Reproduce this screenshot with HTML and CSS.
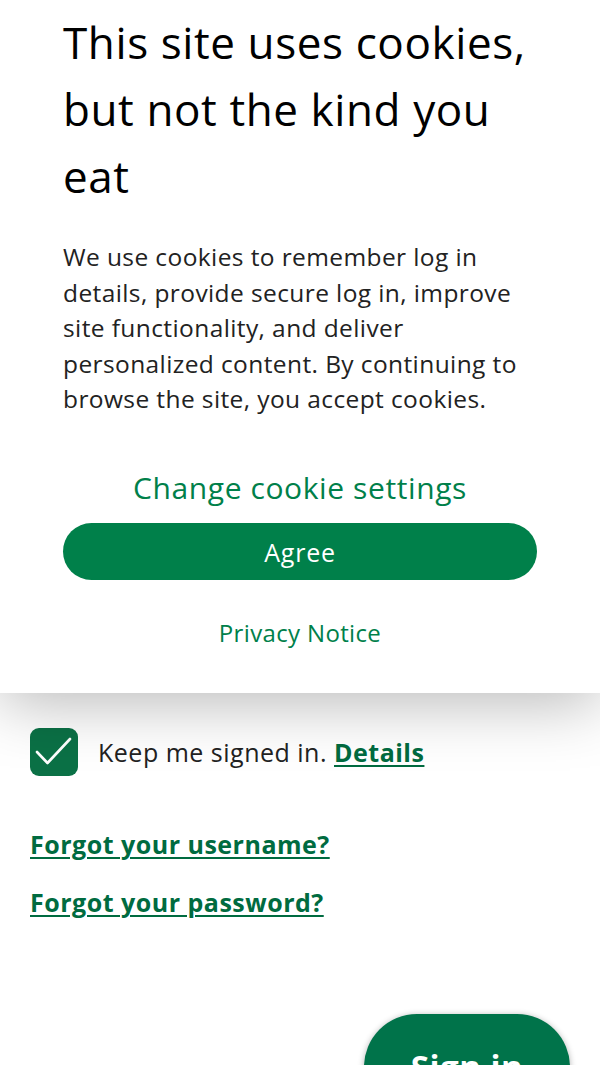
FILE: index.html
```html
<!DOCTYPE html>
<html lang="en">
<head>
<meta charset="utf-8">
<title>Sign in</title>
<link rel="stylesheet" href="styles.css">
</head>
<body>
<div class="banner">
  <h1 class="banner-title">This site uses cookies, but not the kind you eat</h1>
  <p class="banner-text">We use cookies to remember log in details, provide secure log in, improve site functionality, and deliver personalized content. By continuing to browse the site, you accept cookies.</p>
  <a class="settings-link" href="#">Change cookie settings</a>
  <button class="agree-btn" type="button">Agree</button>
  <a class="privacy-link" href="#">Privacy Notice</a>
</div>
<main class="content">
  <label class="keep">
    <span class="checkbox">
      <svg width="48" height="48" viewBox="0 0 48 48"><path d="M7 24 L17.5 35 L40 11" fill="none" stroke="#fff" stroke-width="2.6" stroke-linecap="round" stroke-linejoin="round"/></svg>
    </span>
    <span class="keep-text">Keep me signed in. <a class="details" href="#">Details</a></span>
  </label>
  <div class="forgot">
    <a class="forgot-link" href="#">Forgot your username?</a>
    <a class="forgot-link" href="#">Forgot your password?</a>
  </div>
  <div class="actions">
    <button class="signin-btn" type="button">Sign in</button>
  </div>
</main>
</body>
</html>
```
FILE: styles.css
```css
* { box-sizing: border-box; }
html, body { margin: 0; padding: 0; }
body {
  width: 600px;
  height: 1065px;
  overflow: hidden;
  background: #fff;
  font-family: "Open Sans", Lato, sans-serif;
  color: #222;
}
.banner {
  position: relative;
  z-index: 2;
  background: #fff;
  padding: 9px 63px 0;
  height: 693px;
  display: flex;
  flex-direction: column;
  box-shadow: 0 10px 60px rgba(0, 0, 0, 0.28);
}
.banner-title {
  margin: 0;
  font-size: 44px;
  line-height: 67px;
  letter-spacing: 0.6px;
  font-weight: 400;
  color: #000;
}
.banner-text {
  margin: 29px 0 0;
  font-size: 24.5px;
  line-height: 35.5px;
  letter-spacing: 0.4px;
  color: #222;
}
.settings-link {
  margin-top: 53.5px;
  align-self: center;
  font-size: 30px;
  line-height: 36px;
  letter-spacing: 0.6px;
  color: #00804a;
  text-decoration: none;
}
.agree-btn {
  margin-top: 17.3px;
  height: 57px;
  width: 100%;
  border: none;
  border-radius: 29px;
  background: #00804a;
  color: #fff;
  font-family: inherit;
  font-size: 25px;
  letter-spacing: 0.8px;
  padding: 0;
}
.privacy-link {
  margin-top: 37.7px;
  align-self: center;
  font-size: 24px;
  line-height: 30px;
  letter-spacing: 0.35px;
  color: #00804a;
  text-decoration: none;
}
.content {
  position: relative;
  z-index: 1;
  padding: 35px 30px 0;
}
.keep {
  display: flex;
  align-items: center;
  gap: 20px;
}
.checkbox {
  width: 48px;
  height: 48px;
  border-radius: 9px;
  background: #0b7146;
  display: block;
  flex: none;
}
.checkbox svg { display: block; }
.keep-text {
  font-size: 25px;
  line-height: 32px;
  letter-spacing: 0.5px;
  color: #222;
}
.details {
  color: #006b40;
  font-weight: 700;
  text-decoration: underline;
  text-decoration-thickness: 2px;
  text-underline-offset: 3px;
}
.forgot {
  margin-top: 52.3px;
  display: flex;
  flex-direction: column;
  align-items: flex-start;
  gap: 26px;
}
.forgot-link {
  font-size: 25px;
  line-height: 32px;
  letter-spacing: 0.5px;
  font-weight: 700;
  color: #006b40;
  text-decoration: underline;
  text-decoration-thickness: 2px;
  text-underline-offset: 3px;
}
.actions {
  display: flex;
  justify-content: flex-end;
  margin-top: 95.7px;
}
.signin-btn {
  width: 206px;
  height: 106px;
  border: none;
  border-radius: 53px;
  background: #00734a;
  color: #fff;
  font-family: inherit;
  font-size: 33px;
  letter-spacing: 0.5px;
  font-weight: 700;
  padding: 0;
  box-shadow: 0 1px 6px rgba(0, 0, 0, 0.3);
}
```
